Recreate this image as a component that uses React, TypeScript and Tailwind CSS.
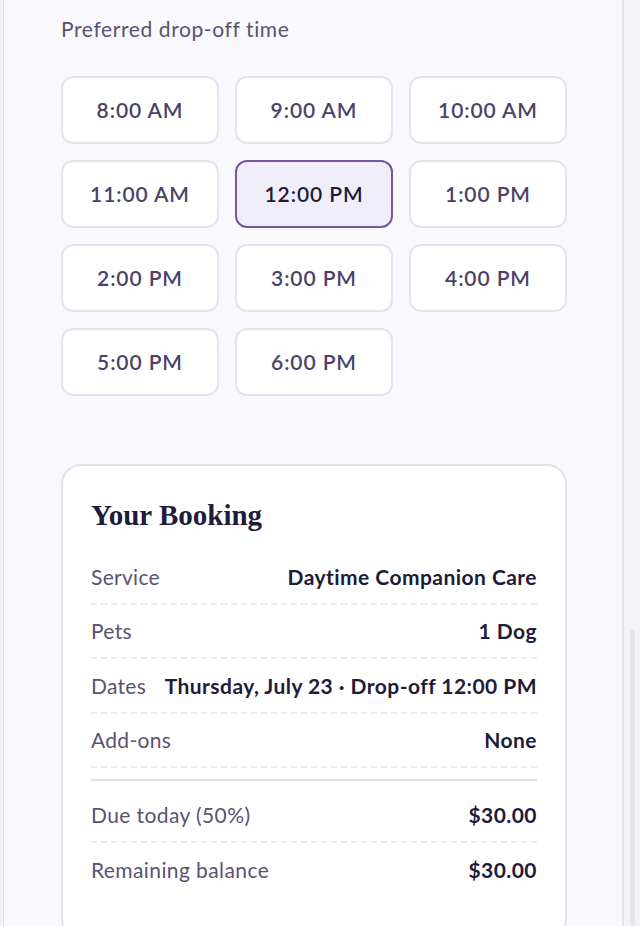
import { useState } from 'react'

const times = [
    '8:00 AM', '9:00 AM', '10:00 AM',
    '11:00 AM', '12:00 PM', '1:00 PM',
    '2:00 PM', '3:00 PM', '4:00 PM',
    '5:00 PM', '6:00 PM',
]

const rows = [
    { label: 'Service', value: 'Daytime Companion Care' },
    { label: 'Pets', value: '1 Dog' },
    { label: 'Dates', value: 'Thursday, July 23 · Drop-off 12:00 PM' },
    { label: 'Add-ons', value: 'None' },
]

const totals = [
    { label: 'Due today (50%)', value: '$30.00' },
    { label: 'Remaining balance', value: '$30.00' },
]

export default function App() {
    const [selected, setSelected] = useState('12:00 PM')

    return (
        <div className="flex h-[926px] w-full overflow-hidden bg-[#f3f2f7] font-['Lato',sans-serif]">
            {/* MAIN PANEL */}
            <div className="ml-[3px] flex-1 border-l border-r-2 border-[#e4e1eb] bg-[#f9f8fd] pl-[57px] pr-[55px] pt-[15px]">
                <p className="text-[21px] tracking-[0.6px] text-[#5a5270] leading-[28px]">Preferred drop-off time</p>

                <div className="mt-[33px] grid grid-cols-3 gap-x-[16px] gap-y-[16px]">
                    {times.map(t => {
                        const active = t === selected
                        return (
                            <button
                                key={t}
                                onClick={() => setSelected(t)}
                                className={
                                    active
                                        ? 'h-[68px] rounded-[12px] border-2 border-[#7558a3] bg-[#f0eef8] text-[21px] font-semibold tracking-[0.9px] text-[#1f1b38]'
                                        : 'h-[68px] rounded-[12px] border-2 border-[#e6e3eb] bg-white text-[21px] font-semibold tracking-[0.9px] text-[#4b4268]'
                                }
                            >
                                {t}
                            </button>
                        )
                    })}
                </div>

                {/* BOOKING CARD */}
                <div className="mt-[68px] rounded-[20px] border-2 border-[#e4e1ea] bg-white px-[28px] pt-[30px] pb-[40px]">
                    <h2 className="font-['Liberation_Serif',serif] text-[29px] font-bold text-[#1f1b3a] leading-[38px]">Your Booking</h2>

                    <div className="mt-[16px]">
                        {rows.map(r => (
                            <div key={r.label} className="flex h-[54.5px] items-center justify-between border-b-2 border-dashed border-[#eceaf0] text-[21px]">
                                <span className="tracking-[0.3px] text-[#5a5270]">{r.label}</span>
                                <span className="font-bold tracking-[0.45px] text-[#1f1b3a]">{r.value}</span>
                            </div>
                        ))}
                    </div>

                    <div className="mt-[11px] border-t-2 border-[#e4e1ea]">
                        {totals.map((r, i) => (
                            <div
                                key={r.label}
                                className={
                                    i === 0
                                        ? 'flex h-[62px] items-center justify-between border-b-2 border-dashed border-[#eceaf0] pt-[8px] text-[21px]'
                                        : 'flex h-[54px] items-center justify-between text-[21px]'
                                }
                            >
                                <span className="tracking-[0.4px] text-[#5a5270]">{r.label}</span>
                                <span className="font-bold tracking-[0.45px] text-[#1f1b3a]">{r.value}</span>
                            </div>
                        ))}
                    </div>
                </div>
            </div>

            {/* SCROLLBAR */}
            <div className="relative w-[16px] bg-[#f4f3f8]">
                <div className="absolute left-[6px] top-[630px] bottom-0 w-[5px] rounded-full bg-[#e6e4ec]" />
            </div>
        </div>
    )
}
